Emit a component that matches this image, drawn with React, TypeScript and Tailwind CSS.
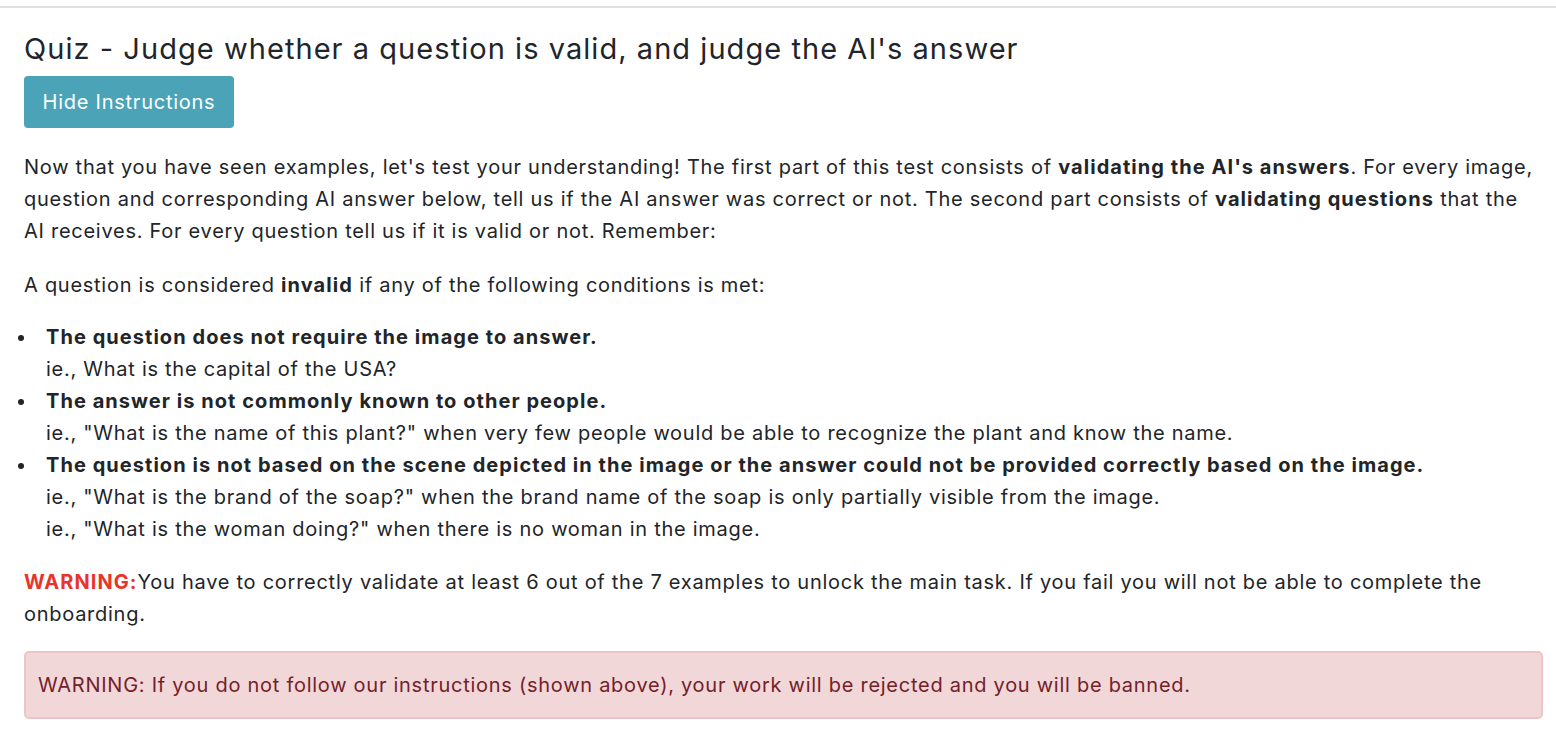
export default function App() {
  const b = 'font-bold tracking-[1.05px]'
  return (
    <div className="min-h-screen bg-white font-['Inter',sans-serif] text-[#212529]">
      <div className="border-t-2 border-[#e0e0e0] mt-[6px]" />
      <div className="pl-6 pr-[13px] pt-[22px]">
        <h1 className="text-[29px] leading-[38px] font-normal tracking-[1.05px]">
          Quiz - Judge whether a question is valid, and judge the AI's answer
        </h1>
        <button
          type="button"
          className="mt-[8px] h-[52px] w-[210px] rounded-[4px] bg-[#4ba3b7] text-white text-[20px] tracking-[0.75px]"
        >
          Hide Instructions
        </button>

        <div className="mt-[23px] text-[20px] leading-[32px] tracking-[0.73px]">
          <p>
            Now that you have seen examples, let's test your understanding! The first part of this test consists of{' '}
            <b className={b}>validating the AI's answers</b>. For every image, question and corresponding AI answer
            below, tell us if the AI answer was correct or not. The second part consists of{' '}
            <b className={b}>validating questions</b> that the AI receives. For every question tell us if it is valid or
            not. Remember:
          </p>
          <p className="mt-[22px]">
            A question is considered <b className={b}>invalid</b> if any of the following conditions is met:
          </p>
          <ul className="mt-[20px] list-disc pl-[13px]">
            <li className="pl-[9px]">
              <b className={b}>The question does not require the image to answer.</b>
              <br />
              ie., What is the capital of the USA?
            </li>
            <li className="pl-[9px]">
              <b className={b}>The answer is not commonly known to other people.</b>
              <br />
              ie., "What is the name of this plant?" when very few people would be able to recognize the plant and know
              the name.
            </li>
            <li className="pl-[9px]">
              <b className={b}>
                The question is not based on the scene depicted in the image or the answer could not be provided
                correctly based on the image.
              </b>
              <br />
              ie., "What is the brand of the soap?" when the brand name of the soap is only partially visible from the
              image.
              <br />
              ie., "What is the woman doing?" when there is no woman in the image.
            </li>
          </ul>
          <p className="mt-[21px]">
            <span className={`${b} text-[#e8352b]`}>WARNING:</span>You have to correctly validate at least 6 out of the
            7 examples to unlock the main task. If you fail you will not be able to complete the onboarding.
          </p>
          <div className="mt-[21px] flex h-[68px] items-center rounded-[5px] border-2 border-[#efc4c8] bg-[#f2d7d9] px-[12px] text-[#722129]">
            WARNING: If you do not follow our instructions (shown above), your work will be rejected and you will be
            banned.
          </div>
        </div>
      </div>
    </div>
  )
}
